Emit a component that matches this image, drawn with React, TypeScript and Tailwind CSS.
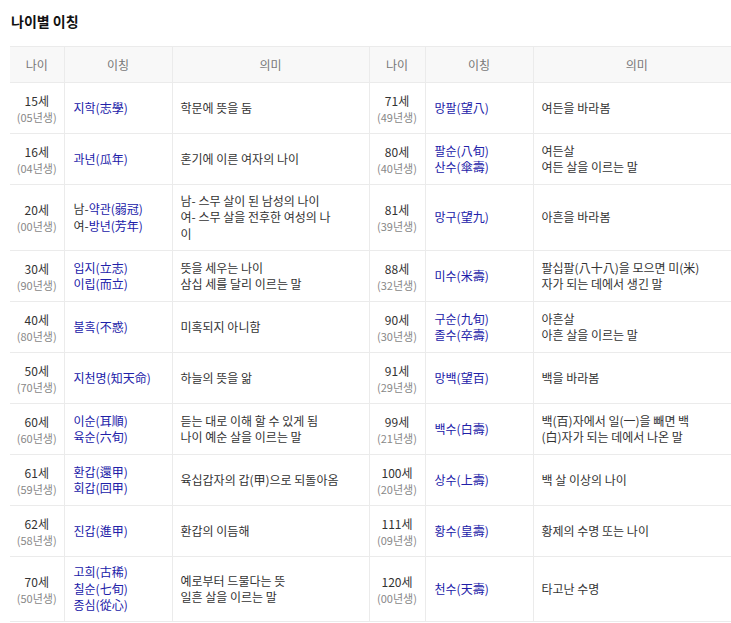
import React from "react";

type Row = {
  age: string;
  year: string;
  names: React.ReactNode[];
  meaning: string[];
  h: number;
};

const B = ({ children }: { children: React.ReactNode }) => (
  <span className="text-[#2020a8]">{children}</span>
);

const left: Row[] = [
  { age: "15세", year: "(05년생)", names: [<B>지학(志學)</B>], meaning: ["학문에 뜻을 둠"], h: 51 },
  { age: "16세", year: "(04년생)", names: [<B>과년(瓜年)</B>], meaning: ["혼기에 이른 여자의 나이"], h: 51 },
  {
    age: "20세",
    year: "(00년생)",
    names: [
      <>남-<B>약관(弱冠)</B></>,
      <>여-<B>방년(芳年)</B></>,
    ],
    meaning: ["남- 스무 살이 된 남성의 나이", "여- 스무 살을 전후한 여성의 나", "이"],
    h: 66,
  },
  { age: "30세", year: "(90년생)", names: [<B>입지(立志)</B>, <B>이립(而立)</B>], meaning: ["뜻을 세우는 나이", "삼십 세를 달리 이르는 말"], h: 51 },
  { age: "40세", year: "(80년생)", names: [<B>불혹(不惑)</B>], meaning: ["미혹되지 아니함"], h: 51 },
  { age: "50세", year: "(70년생)", names: [<B>지천명(知天命)</B>], meaning: ["하늘의 뜻을 앎"], h: 51 },
  { age: "60세", year: "(60년생)", names: [<B>이순(耳順)</B>, <B>육순(六旬)</B>], meaning: ["듣는 대로 이해 할 수 있게 됨", "나이 예순 살을 이르는 말"], h: 51 },
  { age: "61세", year: "(59년생)", names: [<B>환갑(還甲)</B>, <B>회갑(回甲)</B>], meaning: ["육십갑자의 갑(甲)으로 되돌아옴"], h: 51 },
  { age: "62세", year: "(58년생)", names: [<B>진갑(進甲)</B>], meaning: ["환갑의 이듬해"], h: 51 },
  {
    age: "70세",
    year: "(50년생)",
    names: [<B>고희(古稀)</B>, <B>칠순(七旬)</B>, <B>종심(從心)</B>],
    meaning: ["예로부터 드물다는 뜻", "일흔 살을 이르는 말"],
    h: 65,
  },
];

const right: Row[] = [
  { age: "71세", year: "(49년생)", names: [<B>망팔(望八)</B>], meaning: ["여든을 바라봄"], h: 51 },
  { age: "80세", year: "(40년생)", names: [<B>팔순(八旬)</B>, <B>산수(傘壽)</B>], meaning: ["여든살", "여든 살을 이르는 말"], h: 51 },
  { age: "81세", year: "(39년생)", names: [<B>망구(望九)</B>], meaning: ["아흔을 바라봄"], h: 66 },
  { age: "88세", year: "(32년생)", names: [<B>미수(米壽)</B>], meaning: ["팔십팔(八十八)을 모으면 미(米)", "자가 되는 데에서 생긴 말"], h: 51 },
  { age: "90세", year: "(30년생)", names: [<B>구순(九旬)</B>, <B>졸수(卒壽)</B>], meaning: ["아흔살", "아흔 살을 이르는 말"], h: 51 },
  { age: "91세", year: "(29년생)", names: [<B>망백(望百)</B>], meaning: ["백을 바라봄"], h: 51 },
  { age: "99세", year: "(21년생)", names: [<B>백수(白壽)</B>], meaning: ["백(百)자에서 일(一)을 빼면 백", "(白)자가 되는 데에서 나온 말"], h: 51 },
  { age: "100세", year: "(20년생)", names: [<B>상수(上壽)</B>], meaning: ["백 살 이상의 나이"], h: 51 },
  { age: "111세", year: "(09년생)", names: [<B>황수(皇壽)</B>], meaning: ["황제의 수명 또는 나이"], h: 51 },
  { age: "120세", year: "(00년생)", names: [<B>천수(天壽)</B>], meaning: ["타고난 수명"], h: 65 },
];

const td = "border border-[#ebebeb] align-middle";

function Cells({ r, first }: { r: Row; first: boolean }) {
  return (
    <>
      <td className={`${td} text-center ${first ? "border-l-0" : ""}`}>
        <div className="text-[12px] leading-[17px] text-[#333]">{r.age}</div>
        <div className="text-[11px] leading-[16px] text-[#888]">{r.year}</div>
      </td>
      <td className={`${td} pl-[9px] text-[12px] leading-[16.5px] text-[#333]`}>
        {r.names.map((n, i) => (
          <div key={i} className="whitespace-nowrap">
            {n}
          </div>
        ))}
      </td>
      <td className={`${td} pl-[8px] text-[12px] leading-[16.5px] text-[#333] ${first ? "" : "border-r-0"}`}>
        {r.meaning.map((m, i) => (
          <div key={i} className="whitespace-nowrap">
            {m}
          </div>
        ))}
      </td>
    </>
  );
}

export default function App() {
  const th = "border border-[#ebebeb] bg-[#f8f8f8] text-[12px] font-normal text-[#777] text-center";
  return (
    <div
      className="w-[731px] h-[623px] overflow-hidden bg-white"
      style={{ fontFamily: '"Noto Sans CJK KR", "Noto Sans", sans-serif' }}
    >
      <h2 className="pl-[11px] pt-[11px] h-[46px] text-[14px] leading-[20px] font-bold text-[#111]">나이별 이칭</h2>
      <div className="pl-[10px]">
        <table className="border-collapse table-fixed w-[730px]">
          <colgroup>
            <col className="w-[54px]" />
            <col className="w-[108px]" />
            <col className="w-[197px]" />
            <col className="w-[56px]" />
            <col className="w-[108px]" />
            <col />
          </colgroup>
          <thead>
            <tr className="h-[36px]">
              <th className={`${th} border-l-0`}>나이</th>
              <th className={th}>이칭</th>
              <th className={th}>의미</th>
              <th className={th}>나이</th>
              <th className={th}>이칭</th>
              <th className={`${th} border-r-0`}>의미</th>
            </tr>
          </thead>
          <tbody>
            {left.map((r, i) => (
              <tr key={i} style={{ height: r.h }}>
                <Cells r={r} first />
                <Cells r={right[i]} first={false} />
              </tr>
            ))}
          </tbody>
        </table>
      </div>
    </div>
  );
}
